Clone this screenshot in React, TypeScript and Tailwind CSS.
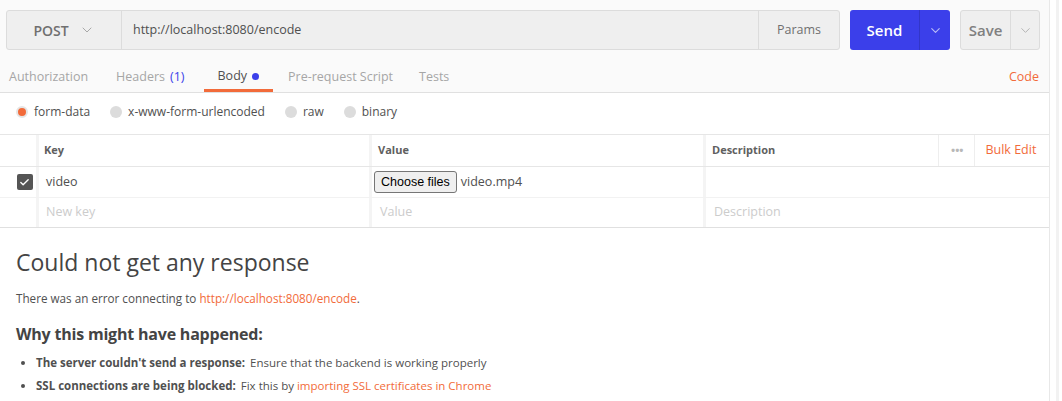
import { Check, ChevronDown } from "lucide-react";

const FONT = { fontFamily: '"Open Sans", "Noto Sans", sans-serif' };

const MODES = [
  { label: "form-data", on: true },
  { label: "x-www-form-urlencoded" },
  { label: "raw" },
  { label: "binary" },
];

function Radio({ on }: { on?: boolean }) {
  return (
    <span
      className={`inline-block h-[12px] w-[12px] rounded-full ${
        on ? "border-[2px] border-[#e5e5e5] bg-[#f26b3a]" : "bg-[#dcdcdc]"
      }`}
    />
  );
}

export default function App() {
  return (
    <div className="flex h-[401px] w-[1062px] overflow-hidden bg-white text-[#505050]" style={FONT}>
      <div className="flex w-[1050px] flex-col border-r border-[#e8e8e8]">
        {/* request bar */}
        <div className="bg-[#fafafa]">
          <div className="flex h-[60px] items-start pl-[6px] pt-[10px]">
            <div className="flex h-[40px] w-[834px] rounded-[3px] border border-[#dcdcdc] bg-[#efefef]">
              <div className="flex w-[115px] items-center justify-center gap-[10px] border-r border-[#dcdcdc] text-[14px] font-semibold text-[#707070]">
                POST
                <ChevronDown size={16} strokeWidth={1.5} className="text-[#a8a8a8]" />
              </div>
              <div className="flex flex-1 items-center pl-[11px] text-[12.5px] text-[#505050]">
                http://localhost:8080/encode
              </div>
              <div className="flex w-[81px] items-center justify-center border-l border-[#dcdcdc] text-[12.5px] text-[#707070]">
                Params
              </div>
            </div>
            <div className="ml-[10px] flex h-[40px] w-[100px] rounded-[3px] bg-[#3b3fea] text-white">
              <div className="flex w-[69px] items-center justify-center text-[15px] font-semibold">Send</div>
              <div className="flex flex-1 items-center justify-center border-l border-[#3236c9]">
                <ChevronDown size={15} strokeWidth={1.8} className="text-[#b9bbf6]" />
              </div>
            </div>
            <div className="ml-[10px] flex h-[40px] w-[80px] rounded-[3px] border border-[#dcdcdc] bg-[#efefef] text-[#808080]">
              <div className="flex w-[49px] items-center justify-center text-[15px] font-semibold">Save</div>
              <div className="flex flex-1 items-center justify-center border-l border-[#dcdcdc]">
                <ChevronDown size={15} strokeWidth={1.5} className="text-[#b0b0b0]" />
              </div>
            </div>
          </div>

          {/* tabs */}
          <div className="flex h-[33px] items-stretch border-b border-[#e0e0e0] pl-[9px] pr-[10px] text-[12.5px] text-[#a6a6a6]">
            <div className="flex items-center pt-[3px]">Authorization</div>
            <div className="ml-[28px] flex items-center pt-[3px]">
              Headers<span className="ml-[5px] text-[#3b3fea]">(1)</span>
            </div>
            <div className="ml-[19px] flex items-center border-b-[3px] border-[#f26b3a] px-[14px] pt-[3px] text-[#505050]">
              Body
              <span className="ml-[5px] inline-block h-[7px] w-[7px] rounded-full bg-[#3b3fea]" />
            </div>
            <div className="ml-[15px] flex items-center pt-[3px]">Pre-request Script</div>
            <div className="ml-[26px] flex items-center pt-[3px]">Tests</div>
            <div className="ml-auto flex items-center pt-[3px] text-[#f26b3a]">Code</div>
          </div>
        </div>

        {/* body modes */}
        <div className="flex h-[42px] items-center border-b border-[#e6e6e6] pb-[4px] pl-[16px] text-[12px] text-[#505050]">
          {MODES.map((m, i) => (
            <label key={m.label} className={`flex items-center gap-[6px] ${i ? "ml-[20px]" : ""}`}>
              <Radio on={m.on} />
              {m.label}
            </label>
          ))}
        </div>

        {/* key/value table */}
        <div className="text-[12.5px]">
          <div className="flex h-[32px] items-center border-b border-[#e6e6e6] text-[11px] font-bold text-[#606060]">
            <div className="h-full w-[39px] border-r-[3px] border-[#f4f4f4]" />
            <div className="flex h-full w-[333px] items-center border-r-[3px] border-[#f4f4f4] pl-[5px]">Key</div>
            <div className="flex h-full w-[334px] items-center border-r-[3px] border-[#f4f4f4] pl-[6px]">Value</div>
            <div className="flex h-full w-[232px] items-center pl-[6px]">Description</div>
            <div className="flex h-full items-center border-l border-[#eeeeee] pl-[12px] pr-[11px] text-[#b8b8b8]">•••</div>
            <div className="flex h-full items-center border-l border-[#eeeeee] pl-[10px] text-[12.5px] font-normal text-[#f26b3a]">
              Bulk Edit
            </div>
          </div>
          <div className="flex h-[31px] items-center border-b border-[#f2f2f2]">
            <div className="flex h-full w-[39px] items-center justify-center border-r-[3px] border-[#f4f4f4] pl-[13px]">
              <span className="flex h-[16px] w-[16px] items-center justify-center rounded-[2px] bg-[#555555]">
                <Check size={11} strokeWidth={3} className="text-white" />
              </span>
            </div>
            <div className="flex h-full w-[333px] items-center border-r-[3px] border-[#f4f4f4] pl-[7px] text-[#505050]">
              video
            </div>
            <div className="flex h-full w-[334px] items-center border-r-[3px] border-[#f4f4f4] pl-[2px]">
              <span
                className="rounded-[3px] border border-[#767676] bg-[#efefef] px-[6px] py-[1px] text-[12.5px] text-black"
                style={{ fontFamily: '"Liberation Sans", Arial, sans-serif' }}
              >
                Choose files
              </span>
              <span className="ml-[4px] text-[#505050]">video.mp4</span>
            </div>
            <div className="flex-1" />
          </div>
          <div className="flex h-[30px] items-center border-b border-[#e0e0e0] text-[#cccccc]">
            <div className="h-full w-[39px] border-r-[3px] border-[#f4f4f4]" />
            <div className="flex h-full w-[333px] items-center border-r-[3px] border-[#f4f4f4] pl-[7px]">New key</div>
            <div className="flex h-full w-[334px] items-center border-r-[3px] border-[#f4f4f4] pl-[8px]">Value</div>
            <div className="flex h-full flex-1 items-center pl-[8px]">Description</div>
          </div>
        </div>

        {/* response */}
        <div className="px-[16px] pt-[17px] text-[#505050]">
          <h1 className="text-[23px] leading-[34px] text-[#444444]">Could not get any response</h1>
          <p className="mt-[11px] text-[11.7px]">
            There was an error connecting to <span className="text-[#f26b3a]">http://localhost:8080/encode</span>.
          </p>
          <h2 className="mt-[14px] text-[16px] font-bold tracking-[-0.2px] text-[#444444]">
            Why this might have happened:
          </h2>
          <ul className="mt-[5px] list-disc pl-[20px] text-[11.5px] leading-[23px]">
            <li>
              <b className="mr-[5px]">The server couldn&apos;t send a response:</b>
              Ensure that the backend is working properly
            </li>
            <li>
              <b className="mr-[5px]">SSL connections are being blocked:</b>
              Fix this by <span className="text-[#f26b3a]">importing SSL certificates in Chrome</span>
            </li>
          </ul>
        </div>
      </div>
      <div className="flex flex-1 justify-center bg-white">
        <div className="ml-[2px] w-[3px] bg-[#f2f2f2]" />
      </div>
    </div>
  );
}
